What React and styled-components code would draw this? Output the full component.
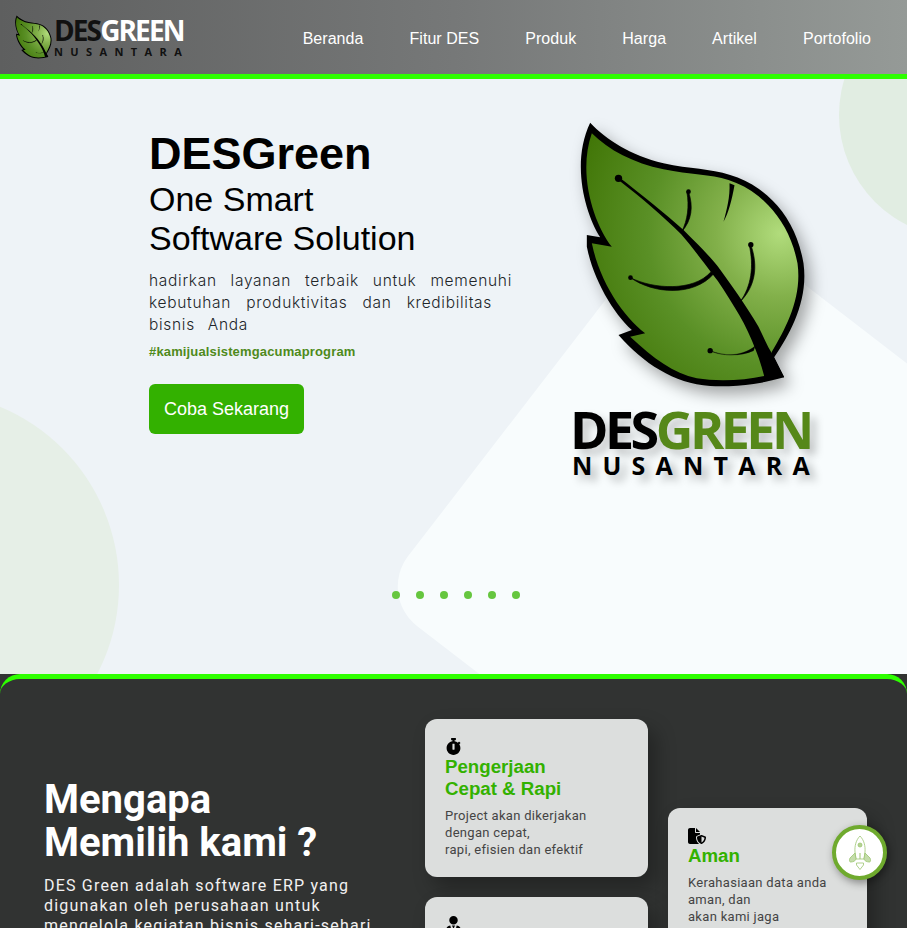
import React from "react";
import styled, { createGlobalStyle } from "styled-components";
import { FaStopwatch, FaUserTie } from "react-icons/fa";
import { FaFileShield } from "react-icons/fa6";

const GlobalStyle = createGlobalStyle`
  html, body {
    margin: 0;
    padding: 0;
    background: #313332;
  }
  * {
    box-sizing: border-box;
  }
`;

const menu = ["Beranda", "Fitur DES", "Produk", "Harga", "Artikel", "Portofolio"];
const slides = [1, 2, 3, 4, 5, 6];

const Leaf = ({ id, width, height }) => (
  <svg width={width} height={height} viewBox="90 60 680 810">
    <defs>
      <radialGradient id={id} gradientUnits="userSpaceOnUse" cx="690" cy="400" r="640">
        <stop offset="0" stopColor="#b1dc7c" />
        <stop offset="0.3" stopColor="#82b04a" />
        <stop offset="0.62" stopColor="#5a9026" />
        <stop offset="1" stopColor="#417607" />
      </radialGradient>
    </defs>
    <path d="M120 68 C170 120 240 165 340 190 C420 208 480 205 540 225 C645 255 738 350 760 490 C775 600 722 700 672 772 L702 832 C640 850 560 862 480 858 C370 850 280 790 205 705 L245 690 C190 640 130 540 110 440 L110 405 L150 412 C105 340 62 190 120 68 Z" fill="#000" />
    <path d="M125 100 C175 150 250 190 340 208 C420 225 480 222 535 240 C630 270 718 360 742 490 C756 590 710 680 665 755 L642 828 C580 842 500 845 440 835 C370 820 310 775 240 710 L285 700 C220 650 150 550 125 430 L185 440 C130 370 82 220 125 100 Z" fill={`url(#${id})`} />
    <path d="M205 230 C275 285 345 340 400 390 C440 430 475 465 502 498 C540 550 590 620 625 680 C640 710 650 735 665 760 L702 832 L642 828 C625 760 590 680 555 625 C530 585 510 550 485 520 C455 480 425 440 393 403 C340 350 270 290 205 240 Z" fill="#000" />
    <circle cx="205" cy="235" r="11" fill="#000" />
    <path d="M415 275 C430 320 425 360 395 395 C412 360 418 320 410 275 Z" fill="#000" stroke="#000" strokeWidth="2" />
    <circle cx="415" cy="275" r="7" fill="#000" />
    <path d="M538 250 L553 256 C545 300 535 340 520 365 C530 330 540 290 538 250 Z" fill="#000" />
    <path d="M602 434 C625 500 615 560 570 605 C603 560 612 500 597 434 Z" fill="#000" stroke="#000" strokeWidth="2" />
    <circle cx="602" cy="434" r="8" fill="#000" />
    <path d="M241 533 C310 582 430 590 490 522 L482 516 C430 575 310 568 241 533 Z" fill="#000" stroke="#000" strokeWidth="2" />
    <circle cx="241" cy="533" r="7" fill="#000" />
    <path d="M480 752 C520 772 580 768 615 738 L610 752 C570 770 520 768 480 752 Z" fill="#000" stroke="#000" strokeWidth="1" />
    <circle cx="480" cy="752" r="8" fill="#000" />
  </svg>
);

const Rocket = () => (
  <svg width="24" height="36" viewBox="0 0 24 36" fill="none" stroke="#9cc571" strokeWidth="0.8">
    <path d="M12 1 C16 5 17.5 11 17 17 L16 24 L8 24 L7 17 C6.5 11 8 5 12 1 Z" />
    <circle cx="12" cy="10" r="2" fill="#b5d392" />
    <path d="M12 18 V24" strokeWidth="1" />
    <path d="M7 18 L2 23 C1 25 1.5 27 2.5 27 C5 27 7.5 26 8 24 Z" fill="#c4dcaa" />
    <path d="M17 18 L22 23 C23 25 22.5 27 21.5 27 C19 27 16.5 26 16 24 Z" fill="#c4dcaa" />
    <path d="M8.5 28 H15.5 L15.5 30 L12 34.5 L8.5 30 Z" />
  </svg>
);

export default function App() {
  return (
    <Page>
      <GlobalStyle />
      <Header>
        <Brand>
          <Leaf id="leaf-small" width="37" height="44" />
          <BrandText>
            <BrandName>
              DES<BrandGreen>GREEN</BrandGreen>
            </BrandName>
            <BrandSub>NUSANTARA</BrandSub>
          </BrandText>
        </Brand>
        <Nav>
          {menu.map((item) => (
            <NavLink key={item}>{item}</NavLink>
          ))}
        </Nav>
      </Header>

      <Hero>
        <Diamond />
        <Blob $left="-267px" $top="313px" $size="386px" $color="#e6efe7" />
        <Blob $left="839px" $top="-87px" $size="246px" $color="#e1ede2" />
        <HeroBody>
          <HeroText>
            <Title>DESGreen</Title>
            <Tagline>
              One Smart
              <br />
              Software Solution
            </Tagline>
            <Lede>
              <LedeLine $width="363px">hadirkan layanan terbaik untuk memenuhi</LedeLine>
              <LedeLine $width="343px">kebutuhan produktivitas dan kredibilitas</LedeLine>
              <LedeLine $width="99px">bisnis Anda</LedeLine>
            </Lede>
            <Hashtag>#kamijualsistemgacumaprogram</Hashtag>
            <CtaButton>Coba Sekarang</CtaButton>
          </HeroText>
          <HeroLogo>
            <LeafWrap>
              <Leaf id="leaf-big" width="227" height="270" />
            </LeafWrap>
            <LogoName>
              DES<LogoGreen>GREEN</LogoGreen>
            </LogoName>
            <LogoSub>NUSANTARA</LogoSub>
          </HeroLogo>
        </HeroBody>
        <Dots>
          {slides.map((s) => (
            <Dot key={s} />
          ))}
        </Dots>
      </Hero>

      <Why>
        <WhyIntro>
          <WhyTitle>
            Mengapa
            <br />
            Memilih kami ?
          </WhyTitle>
          <WhyText>
            DES Green adalah software ERP yang
            <br />
            digunakan oleh perusahaan untuk
            <br />
            mengelola kegiatan bisnis sehari-sehari
          </WhyText>
        </WhyIntro>
        <CardColumn $width="223px">
          <Card>
            <CardIcon>
              <FaStopwatch size={17} />
            </CardIcon>
            <CardTitle>
              Pengerjaan
              <br />
              Cepat &amp; Rapi
            </CardTitle>
            <CardText>
              Project akan dikerjakan
              <br />
              dengan cepat,
              <br />
              rapi, efisien dan efektif
            </CardText>
          </Card>
          <Card>
            <CardIcon>
              <FaUserTie size={17} />
            </CardIcon>
          </Card>
        </CardColumn>
        <CardColumn $width="199px" $offset="89px">
          <Card>
            <CardIcon>
              <FaFileShield size={18} />
            </CardIcon>
            <CardTitle>Aman</CardTitle>
            <CardText>
              Kerahasiaan data anda
              <br />
              aman, dan
              <br />
              akan kami jaga
            </CardText>
          </Card>
        </CardColumn>
      </Why>

      <RocketButton>
        <Rocket />
      </RocketButton>
    </Page>
  );
}

const Page = styled.div`
  height: 100vh;
  overflow: hidden;
  background: #313332;
`;

const Header = styled.header`
  height: 79px;
  display: flex;
  align-items: center;
  justify-content: space-between;
  padding: 0 36px 0 15px;
  background: linear-gradient(90deg, #5e5f5f 0%, #767878 50%, #959a97 100%);
  border-bottom: 5px solid #2eff00;
`;

const Brand = styled.div`
  display: flex;
  align-items: center;
  gap: 2px;
`;

const BrandText = styled.div`
  display: flex;
  flex-direction: column;
  font-family: "Open Sans", "Liberation Sans", sans-serif;
  font-weight: 700;
  color: #111;
`;

const BrandName = styled.div`
  font-size: 28px;
  line-height: 26px;
  letter-spacing: -1.9px;
`;

const BrandGreen = styled.span`
  color: #fff;
`;

const BrandSub = styled.div`
  margin-top: 3px;
  font-size: 11px;
  line-height: 12px;
  letter-spacing: 7.4px;
  white-space: nowrap;
`;

const Nav = styled.nav`
  display: flex;
  gap: 46px;
  padding-top: 3px;
`;

const NavLink = styled.a`
  font-family: "Liberation Sans", Arial, sans-serif;
  font-size: 16px;
  letter-spacing: 0.05px;
  color: #fff;
`;

const Hero = styled.section`
  position: relative;
  height: 595px;
  overflow: hidden;
  background: #eef3f7;
  display: flex;
  flex-direction: column;
`;

const Diamond = styled.div`
  position: absolute;
  left: 687px;
  top: 115px;
  width: 800px;
  height: 507px;
  border-radius: 50px;
  background: #f8fcfd;
  transform-origin: 0 0;
  transform: rotate(37.6deg);
`;

const Blob = styled.div`
  position: absolute;
  left: ${(p) => p.$left};
  top: ${(p) => p.$top};
  width: ${(p) => p.$size};
  height: ${(p) => p.$size};
  border-radius: 50%;
  background: ${(p) => p.$color};
`;

const HeroBody = styled.div`
  position: relative;
  display: flex;
  padding: 41px 0 0 149px;
  height: 512px;
`;

const HeroText = styled.div`
  width: 363px;
  flex-shrink: 0;
  font-family: "Liberation Sans", Arial, sans-serif;
`;

const Title = styled.h1`
  margin: 11px 0 0;
  font-size: 45px;
  line-height: 46px;
  font-weight: 700;
  color: #000;
`;

const Tagline = styled.div`
  margin-top: 3px;
  font-size: 34px;
  line-height: 39px;
  color: #000;
`;

const Lede = styled.div`
  margin-top: 12px;
  font-family: Inter, "Liberation Sans", sans-serif;
  font-weight: 300;
  font-size: 15.5px;
  line-height: 22px;
  letter-spacing: 0.7px;
  color: #212529;
`;

const LedeLine = styled.div`
  width: ${(p) => p.$width};
  text-align: justify;
  text-align-last: justify;
`;

const Hashtag = styled.div`
  margin-top: 8px;
  font-size: 13px;
  line-height: 16px;
  font-weight: 700;
  letter-spacing: 0.15px;
  color: #4f8a1b;
`;

const CtaButton = styled.button`
  display: block;
  margin-top: 24px;
  width: 155px;
  height: 50px;
  border: none;
  border-radius: 6px;
  background: #33b100;
  color: #fff;
  font-family: "Liberation Sans", Arial, sans-serif;
  font-size: 18px;
`;

const HeroLogo = styled.div`
  margin: 0 0 0 68px;
  display: flex;
  flex-direction: column;
  font-family: "Open Sans", "Liberation Sans", sans-serif;
  font-weight: 700;
  color: #000;
`;

const LeafWrap = styled.div`
  height: 270px;
  filter: drop-shadow(6px 8px 8px rgba(0, 0, 0, 0.35));
`;

const LogoName = styled.div`
  margin: 15px 0 0 -10px;
  font-size: 52px;
  line-height: 48px;
  letter-spacing: -3.5px;
  white-space: nowrap;
  text-shadow: 6px 6px 9px rgba(0, 0, 0, 0.22);
`;

const LogoGreen = styled.span`
  color: #568819;
`;

const LogoSub = styled.div`
  margin: -2px 0 0 -8px;
  font-size: 25px;
  line-height: 28px;
  letter-spacing: 10.2px;
  white-space: nowrap;
  text-shadow: 6px 6px 8px rgba(0, 0, 0, 0.28);
`;

const Dots = styled.div`
  position: relative;
  display: flex;
  justify-content: center;
  gap: 16px;
  padding-left: 5px;
`;

const Dot = styled.span`
  width: 8px;
  height: 8px;
  border-radius: 50%;
  background: #66c63f;
`;

const Why = styled.section`
  display: flex;
  align-items: flex-start;
  gap: 20px;
  padding: 40px 0 0 44px;
  min-height: 400px;
  background: #313332;
  border-top: 5px solid #2eff00;
  border-radius: 20px 20px 0 0;
`;

const WhyIntro = styled.div`
  width: 361px;
  flex-shrink: 0;
  padding-top: 59px;
`;

const WhyTitle = styled.h2`
  margin: 0;
  font-family: Roboto, "Liberation Sans", sans-serif;
  font-size: 40px;
  line-height: 43px;
  font-weight: 700;
  color: #fff;
`;

const WhyText = styled.p`
  margin: 12px 0 0;
  font-family: Roboto, "Liberation Sans", sans-serif;
  font-size: 16px;
  line-height: 20px;
  letter-spacing: 1.2px;
  white-space: nowrap;
  color: #f1f1f1;
`;

const CardColumn = styled.div`
  width: ${(p) => p.$width};
  flex-shrink: 0;
  margin-top: ${(p) => p.$offset || 0};
  display: flex;
  flex-direction: column;
  gap: 20px;
`;

const Card = styled.div`
  padding: 19px 20px;
  border-radius: 12px;
  background: #dcdedd;
  box-shadow: 8px 10px 20px rgba(0, 0, 0, 0.3);
`;

const CardIcon = styled.div`
  height: 18px;
  color: #000;
  line-height: 0;
`;

const CardTitle = styled.h3`
  margin: 0;
  font-family: "Liberation Sans", Arial, sans-serif;
  font-size: 18.7px;
  line-height: 22px;
  font-weight: 700;
  color: #33b100;
`;

const CardText = styled.p`
  margin: 7px 0 0;
  font-family: Roboto, "Liberation Sans", sans-serif;
  font-size: 13px;
  line-height: 17px;
  letter-spacing: 0.3px;
  color: #444;
`;

const RocketButton = styled.button`
  position: fixed;
  right: 20px;
  bottom: 48px;
  width: 55px;
  height: 55px;
  padding: 0;
  display: flex;
  align-items: center;
  justify-content: center;
  border: 4px solid #6faa2e;
  border-radius: 50%;
  background: #fff;
  box-shadow: 2px 3px 8px rgba(0, 0, 0, 0.4);
`;
